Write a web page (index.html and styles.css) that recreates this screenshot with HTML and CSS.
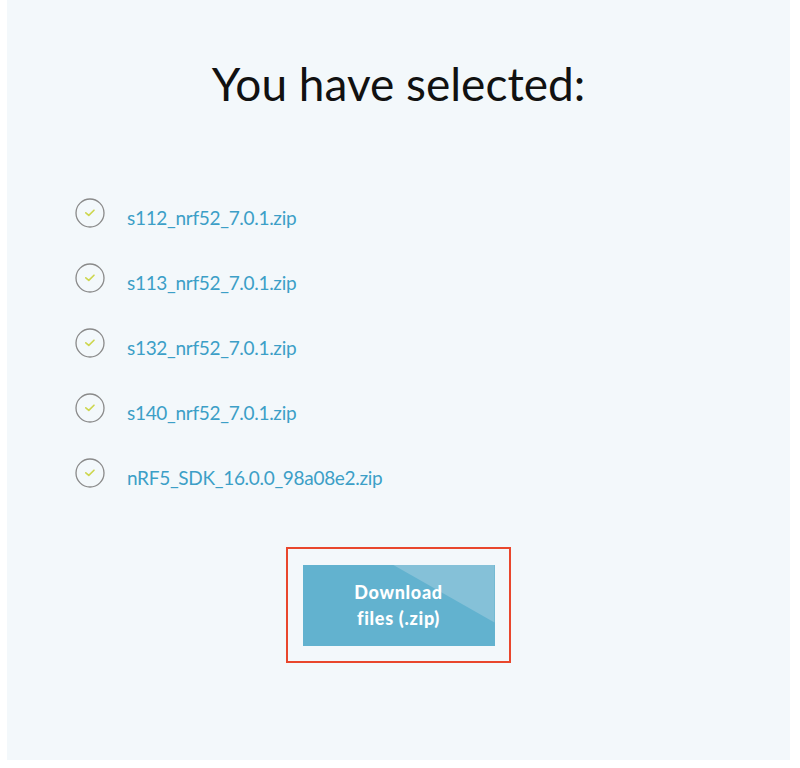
FILE: index.html
```html
<!DOCTYPE html>
<html lang="en">
<head>
<meta charset="utf-8">
<title>You have selected</title>
<link rel="stylesheet" href="styles.css">
</head>
<body>
<main class="panel">
  <h1 class="title">You have selected:</h1>
  <ul class="files">
    <li class="file"><span class="check"><svg viewBox="0 0 30 30" width="30" height="30"><circle cx="15" cy="15" r="14" fill="none" stroke="#8a8a8a" stroke-width="1.3"/><path d="M10.8 14.8 L13.8 17.4 L19 12.2" fill="none" stroke="#cdd64e" stroke-width="1.6" stroke-linecap="round" stroke-linejoin="round"/></svg></span><span class="name">s112_nrf52_7.0.1.zip</span></li>
    <li class="file"><span class="check"><svg viewBox="0 0 30 30" width="30" height="30"><circle cx="15" cy="15" r="14" fill="none" stroke="#8a8a8a" stroke-width="1.3"/><path d="M10.8 14.8 L13.8 17.4 L19 12.2" fill="none" stroke="#cdd64e" stroke-width="1.6" stroke-linecap="round" stroke-linejoin="round"/></svg></span><span class="name">s113_nrf52_7.0.1.zip</span></li>
    <li class="file"><span class="check"><svg viewBox="0 0 30 30" width="30" height="30"><circle cx="15" cy="15" r="14" fill="none" stroke="#8a8a8a" stroke-width="1.3"/><path d="M10.8 14.8 L13.8 17.4 L19 12.2" fill="none" stroke="#cdd64e" stroke-width="1.6" stroke-linecap="round" stroke-linejoin="round"/></svg></span><span class="name">s132_nrf52_7.0.1.zip</span></li>
    <li class="file"><span class="check"><svg viewBox="0 0 30 30" width="30" height="30"><circle cx="15" cy="15" r="14" fill="none" stroke="#8a8a8a" stroke-width="1.3"/><path d="M10.8 14.8 L13.8 17.4 L19 12.2" fill="none" stroke="#cdd64e" stroke-width="1.6" stroke-linecap="round" stroke-linejoin="round"/></svg></span><span class="name">s140_nrf52_7.0.1.zip</span></li>
    <li class="file"><span class="check"><svg viewBox="0 0 30 30" width="30" height="30"><circle cx="15" cy="15" r="14" fill="none" stroke="#8a8a8a" stroke-width="1.3"/><path d="M10.8 14.8 L13.8 17.4 L19 12.2" fill="none" stroke="#cdd64e" stroke-width="1.6" stroke-linecap="round" stroke-linejoin="round"/></svg></span><span class="name">nRF5_SDK_16.0.0_98a08e2.zip</span></li>
  </ul>
  <div class="action">
    <div class="highlight">
      <button class="download" type="button">Download<br>files (.zip)</button>
    </div>
  </div>
</main>
</body>
</html>
```

FILE: styles.css
```css
html, body {
  margin: 0;
  padding: 0;
  background: #ffffff;
}

body {
  font-family: "Lato", "Noto Sans", sans-serif;
}

.panel {
  box-sizing: border-box;
  width: 783px;
  height: 760px;
  margin-left: 7px;
  background: #f3f8fb;
  padding-top: 52px;
}

.title {
  margin: 0;
  text-align: center;
  font-weight: 400;
  font-size: 46px;
  line-height: 64px;
  color: #111111;
}

.files {
  list-style: none;
  margin: 86px 0 0 0;
  padding: 0 0 0 68px;
  display: flex;
  flex-direction: column;
  gap: 35px;
}

.file {
  display: flex;
  align-items: center;
  height: 30px;
}

.check {
  display: flex;
  width: 30px;
  height: 30px;
  margin-top: -8px;
}

.name {
  margin-left: 22px;
  font-size: 19px;
  letter-spacing: -0.3px;
  color: #3c9fc7;
}

.action {
  display: flex;
  justify-content: center;
  margin-top: 55px;
}

.highlight {
  box-sizing: border-box;
  width: 225px;
  height: 116px;
  border: 2px solid #e9472d;
  display: flex;
  align-items: center;
  justify-content: center;
}

.download {
  position: relative;
  isolation: isolate;
  overflow: hidden;
  width: 192px;
  height: 81px;
  border: 0;
  padding: 0;
  color: #ffffff;
  background: #62b2cf;
  font-family: "Lato", "Noto Sans", sans-serif;
  font-weight: 900;
  font-size: 18px;
  line-height: 26px;
  letter-spacing: 0.7px;
}

.download::before {
  content: "";
  position: absolute;
  z-index: -1;
  top: 0;
  right: 0;
  width: 102px;
  height: 58px;
  background: #85c1d8;
  clip-path: polygon(0 0, 100% 0, 100% 100%);
}
```
